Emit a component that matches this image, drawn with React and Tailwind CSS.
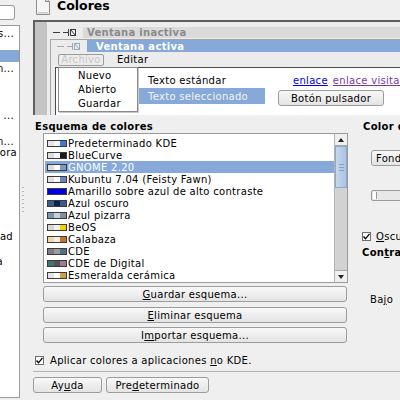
import React from 'react';

const schemes = [
  { name: 'Predeterminado KDE', c: ['#e6e6e6', '#f6f6f6', '#3d7ad8'] },
  { name: 'BlueCurve', c: ['#dcdcdc', '#f6f6f6', '#1a1a1a'] },
  { name: 'GNOME 2.20', c: ['#dcdcdc', '#ffffff', '#7b9cc8'], sel: true },
  { name: 'Kubuntu 7.04 (Feisty Fawn)', c: ['#e0e0e0', '#f8f8f8', '#6a82c0'] },
  { name: 'Amarillo sobre azul de alto contraste', c: ['#0000d8', '#0000f0', '#0000d8'] },
  { name: 'Azul oscuro', c: ['#3e5a8c', '#0c2050', '#3e5a8c'] },
  { name: 'Azul pizarra', c: ['#7c98b0', '#c8d0d8', '#8090a0'] },
  { name: 'BeOS', c: ['#d8d8d8', '#f0f0f0', '#f8d000'] },
  { name: 'Calabaza', c: ['#f0d8a8', '#f8f0e4', '#c87428'] },
  { name: 'CDE', c: ['#7c7c7c', '#9c9c9c', '#52708c'] },
  { name: 'CDE de Digital', c: ['#3c7478', '#4a5658', '#a27898'] },
  { name: 'Esmeralda cerámica', c: ['#e4e4e4', '#ffffff', '#d0a040'] },
];

// minimize dash + sticky pin of the preview title bars
const TitleIcons = ({ color }) => (
  <svg width="26" height="9" viewBox="0 0 26 9" fill="none" stroke={color} strokeWidth="1">
    <line x1="0" y1="4.5" x2="7" y2="4.5" />
    <line x1="10" y1="4.5" x2="15" y2="4.5" />
    <line x1="15.5" y1="1" x2="15.5" y2="8" />
    <rect x="17.5" y="1.5" width="5" height="6" />
    <line x1="17.5" y1="1.5" x2="22.5" y2="7.5" />
  </svg>
);

const Check = () => (
  <span className="flex h-[9px] w-[9px] shrink-0 items-center justify-center border border-[#707070] bg-white">
    <svg width="7" height="7" viewBox="0 0 7 7" fill="none" stroke="#000" strokeWidth="1.3">
      <polyline points="0.5,3.5 2.5,5.8 6.5,0.8" />
    </svg>
  </span>
);

const Btn = ({ className = '', children }) => (
  <div
    className={`flex h-[16px] items-center justify-center rounded-[3px] border border-[#9c9c9c] bg-linear-to-b from-[#f8f8f8] to-[#e4e4e4] text-[10px] text-black ${className}`}
  >
    {children}
  </div>
);

const Swatch = ({ c }) => (
  <span className="flex h-[7px] w-[20px] shrink-0 border border-[#3a3a3a]">
    <span className="w-[6px]" style={{ background: c[0] }} />
    <span className="w-[6px]" style={{ background: c[1] }} />
    <span className="flex-1" style={{ background: c[2] }} />
  </span>
);

const SideRow = ({ h, pr, children, sel }) => (
  <div
    className={`flex items-center justify-end overflow-hidden whitespace-nowrap text-[10px] ${sel ? 'bg-[#86a9d9]' : ''}`}
    style={{ height: h, paddingRight: pr }}
  >
    {children}
  </div>
);

export default function App() {
  return (
    <div className="flex h-[400px] w-[400px] overflow-hidden bg-[#efefef] font-['DejaVu_Sans',sans-serif] tracking-[0.3px] text-black">
      {/* cropped sidebar */}
      <div className="flex w-[20px] shrink-0 flex-col">
        <div className="mt-[5px] h-[15px] w-[15px] rounded-r-[3px] border border-l-0 border-[#9a9a9a] bg-white" />
        <div className="mt-[5px] flex h-[373px] flex-col border-t border-r border-b border-[#9a9a9a] bg-white">
          <div className="h-[1px]" />
          <SideRow h={12} pr={5}>s...</SideRow>
          <div className="h-[11px]" />
          <SideRow h={12} pr={2} sel />
          <SideRow h={12} pr={5}>n...</SideRow>
          <div className="h-[35px]" />
          <SideRow h={12} pr={5}>...</SideRow>
          <div className="h-[15px]" />
          <SideRow h={11} pr={5}>n...</SideRow>
          <SideRow h={10} pr={2}>Impresora</SideRow>
          <div className="h-[73px]" />
          <SideRow h={12} pr={6}>Accesibilidad</SideRow>
          <div className="h-[13px]" />
          <SideRow h={12} pr={16}>Red a</SideRow>
        </div>
      </div>

      {/* splitter */}
      <div className="flex w-[5px] shrink-0 flex-col items-center pt-[187px]">
        <div className="flex flex-col gap-[3px]">
          {[0, 1, 2, 3, 4, 5, 6].map((i) => (
            <div key={i} className="h-[1px] w-[2px] bg-[#b8b8b8]" />
          ))}
        </div>
      </div>

      {/* main module */}
      <div className="flex w-[420px] shrink-0 flex-col pl-[8px]">
        {/* title */}
        <div className="mt-[-5px] flex h-[22px] items-center gap-[6px] pl-[2px]">
          <svg width="16" height="18" viewBox="0 0 16 18">
            <path d="M1.5 0.5 H10.5 L14.5 4.5 V17.5 H1.5 Z" fill="#f4f4f4" stroke="#8c8c8c" />
            <path d="M10.5 0.5 V4.5 H14.5" fill="#dcdcdc" stroke="#8c8c8c" />
            <rect x="3" y="15" width="10" height="1.5" fill="#c8c8c8" />
          </svg>
          <span className="text-[12.5px] font-bold tracking-normal">Colores</span>
        </div>

        {/* preview */}
        <div className="mt-[3px] flex h-[95px] border-t-2 border-l-2 border-[#5e5e5e] bg-[#c4c4c4]">
          <div className="ml-[12px] flex flex-1 flex-col bg-[#ececec]">
            <div className="mt-[5px] flex h-[11px] items-center">
              <div className="flex w-[36px] justify-center pl-[2px]">
                <TitleIcons color="#3a3a3a" />
              </div>
              <div className="flex h-full flex-1 items-center bg-[#dadada] pl-[4px] text-[10px] font-bold text-[#8a8a8a]">
                Ventana inactiva
              </div>
            </div>
            <div className="mt-[1px] ml-[3px] flex flex-1 flex-col border-t border-l border-[#a4a4a4] bg-[#ececec]">
              <div className="flex h-[12px] items-center">
                <div className="flex w-[36px] justify-center pl-[2px]">
                  <TitleIcons color="#9aaabb" />
                </div>
                <div className="flex h-full flex-1 items-center bg-[#86a9d9] pl-[9px] text-[10px] font-bold text-white">
                  Ventana activa
                </div>
              </div>
              <div className="flex h-[15px] items-center text-[10px]">
                <div className="ml-[7px] flex h-[12px] w-[46px] items-center justify-center rounded-[2px] border border-[#9a9a9a] text-[#c8c8c8]">
                  Archivo
                </div>
                <span className="ml-[13px]">Editar</span>
              </div>
              <div className="relative ml-[4px] flex flex-1 border-t border-l border-[#4a4a4a] bg-white text-[10px]">
                <div className="w-[81px] shrink-0" />
                <div className="flex flex-col">
                  <div className="mt-[6px] flex h-[12px] items-center pl-[11px]">Texto estándar</div>
                  <div className="mt-[2px] flex h-[16px] w-[128px] items-center bg-[#86a9d9] pl-[11px] text-[#f4f4f4]">
                    Texto seleccionado
                  </div>
                </div>
                <div className="flex flex-col pl-[13px]">
                  <div className="mt-[6px] flex h-[12px] items-center gap-[5px] pl-[15px] whitespace-nowrap">
                    <span className="text-[#0000ee] underline">enlace</span>
                    <span className="text-[#7a3a9a] underline">enlace visitado</span>
                  </div>
                  <Btn className="mt-[4px] w-[106px]">Botón pulsador</Btn>
                </div>
                {/* open menu */}
                <div className="absolute top-[-1px] left-[2px] flex h-[45px] w-[80px] flex-col justify-center gap-[2px] border border-[#8a8a8a] bg-white pl-[19px] shadow-[1px_1px_0_#c8c8c8]">
                  <div className="h-[12px] leading-[12px]">Nuevo</div>
                  <div className="h-[12px] leading-[12px]">Abierto</div>
                  <div className="h-[12px] leading-[12px]">Guardar</div>
                </div>
              </div>
            </div>
          </div>
        </div>

        {/* scheme + colour columns */}
        <div className="flex pl-[2px]">
          <div className="flex w-[313px] shrink-0 flex-col">
            <div className="mt-[5px] flex h-[12px] items-center text-[10px] font-bold">Esquema de colores</div>
            <div className="mt-[1px] ml-[8px] flex h-[150px] w-[305px] border border-[#9a9a9a] bg-white">
              <div className="flex flex-1 flex-col overflow-hidden pt-[3px] pl-[1px]">
                {schemes.map((s) => (
                  <div
                    key={s.name}
                    className={`flex h-[12px] shrink-0 items-center gap-[1px] pl-[2px] text-[10px] whitespace-nowrap ${
                      s.sel ? 'bg-[#86a9d9] text-white' : ''
                    }`}
                  >
                    <Swatch c={s.c} />
                    {s.name}
                  </div>
                ))}
              </div>
              {/* scrollbar */}
              <div className="flex w-[13px] shrink-0 flex-col border-l border-[#b4b4b4] bg-[#d2d2d2]">
                <div className="flex h-[12px] items-center justify-center border-b border-[#a8a8a8] bg-[#f0f0f0]">
                  <svg width="6" height="4" viewBox="0 0 6 4"><path d="M0 4 L3 0 L6 4 Z" fill="#222" /></svg>
                </div>
                <div className="flex h-[42px] flex-col items-center justify-center gap-[2px] border border-[#8fa8c8] bg-linear-to-r from-[#c8d8ee] to-[#a9c2e4]">
                  <div className="h-[1px] w-[5px] bg-[#8aa0c0]" />
                  <div className="h-[1px] w-[5px] bg-[#8aa0c0]" />
                  <div className="h-[1px] w-[5px] bg-[#8aa0c0]" />
                </div>
                <div className="flex-1" />
                <div className="flex h-[12px] items-center justify-center border-t border-[#a8a8a8] bg-[#f0f0f0]">
                  <svg width="6" height="4" viewBox="0 0 6 4"><path d="M0 0 L3 4 L6 0 Z" fill="#222" /></svg>
                </div>
              </div>
            </div>
            <Btn className="mt-[3px] ml-[8px] w-[304px]">
              <span><span className="underline">G</span>uardar esquema...</span>
            </Btn>
            <Btn className="mt-[5px] ml-[8px] w-[304px]">
              <span><span className="underline">E</span>liminar esquema</span>
            </Btn>
            <Btn className="mt-[4px] ml-[8px] w-[304px]">
              <span>I<span className="underline">m</span>portar esquema...</span>
            </Btn>
          </div>

          <div className="ml-[14px] flex w-[120px] shrink-0 flex-col text-[10px] whitespace-nowrap">
            <div className="mt-[5px] flex h-[12px] items-center pl-[1px] font-bold">Color de widget</div>
            <Btn className="mt-[18px] ml-[9px] h-[15px] w-[90px] justify-start pl-[4px]">Fondo</Btn>
            <div className="mt-[24px] ml-[9px] h-[11px] w-[90px] rounded-[2px] border border-[#9a9a9a] bg-[#e8e8e8] p-[1px]">
              <div className="h-full w-[4px] border-r border-[#9a9a9a] bg-white" />
            </div>
            <div className="mt-[30px] flex h-[10px] items-center gap-[5px]">
              <Check />
              <span><span className="underline">O</span>scurecer filas alternas</span>
            </div>
            <div className="mt-[5px] flex h-[12px] items-center font-bold">
              <span>Con<span className="underline">t</span>raste</span>
            </div>
            <div className="mt-[35px] flex h-[12px] items-center pl-[8px]">
              <span>Ba<span className="underline">j</span>o</span>
            </div>
          </div>
        </div>

        <div className="mt-[12px] flex h-[10px] items-center gap-[6px] pl-[2px] text-[10px]">
          <Check />
          <span>Aplicar colores a aplicaciones <span className="underline">n</span>o KDE.</span>
        </div>
        <div className="mt-[6px] h-[1px] bg-[#b4b4b4]" />
        <div className="mt-[5px] flex gap-[4px]">
          <Btn className="w-[69px]">
            <span>Ay<span className="underline">u</span>da</span>
          </Btn>
          <Btn className="w-[103px]">
            <span>Pre<span className="underline">d</span>eterminado</span>
          </Btn>
        </div>
      </div>
    </div>
  );
}
